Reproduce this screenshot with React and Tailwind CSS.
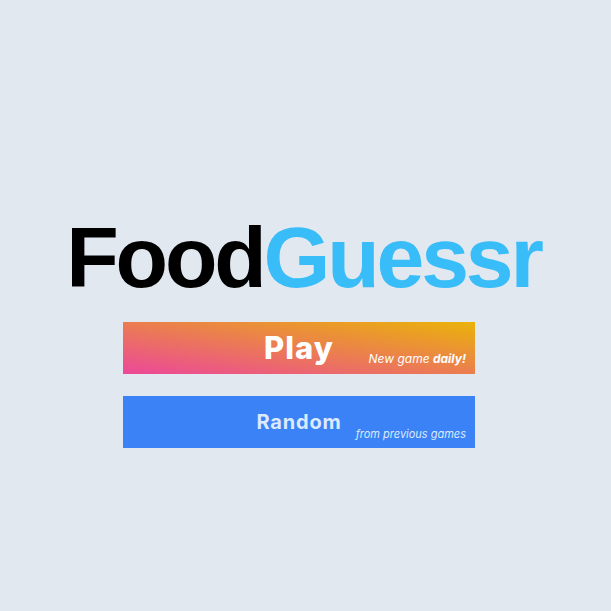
import React from "react";

function MenuButton({ label, note, className, labelClass, noteClass }) {
  return (
    <button
      className={`relative flex h-[52px] w-[352px] items-center justify-center ${className}`}
    >
      <span className={labelClass}>{label}</span>
      <span
        className={`absolute bottom-[6px] right-[9px] italic ${noteClass}`}
      >
        {note}
      </span>
    </button>
  );
}

export default function App() {
  return (
    <div
      className="flex min-h-[611px] w-full flex-col items-center bg-[#e2e8f0] pt-[207px]"
      style={{ fontFamily: "Inter, 'Noto Sans', sans-serif" }}
    >
      <h1
        className="ml-[-4px] text-[86px] font-bold leading-[100px] tracking-[-3.2px]"
        style={{ fontFamily: "'Liberation Sans', Arial, sans-serif" }}
      >
        <span className="text-black">Food</span>
        <span className="text-[#38bdf8]">Guessr</span>
      </h1>

      <div className="mr-[13px] mt-[15px] flex flex-col gap-[22px]">
        <MenuButton
          label="Play"
          note={
            <>
              New game <span className="font-bold">daily!</span>
            </>
          }
          className="bg-[linear-gradient(to_top_right,#ec4899,#eab308)]"
          labelClass="text-[31px] font-extrabold tracking-[1px] text-white"
          noteClass="text-[12px] text-white"
        />
        <MenuButton
          label="Random"
          note="from previous games"
          className="bg-[#3b82f6]"
          labelClass="text-[20px] font-bold tracking-[0.8px] text-[#dbeafe]"
          noteClass="text-[11px] text-[#dbeafe]"
        />
      </div>
    </div>
  );
}
